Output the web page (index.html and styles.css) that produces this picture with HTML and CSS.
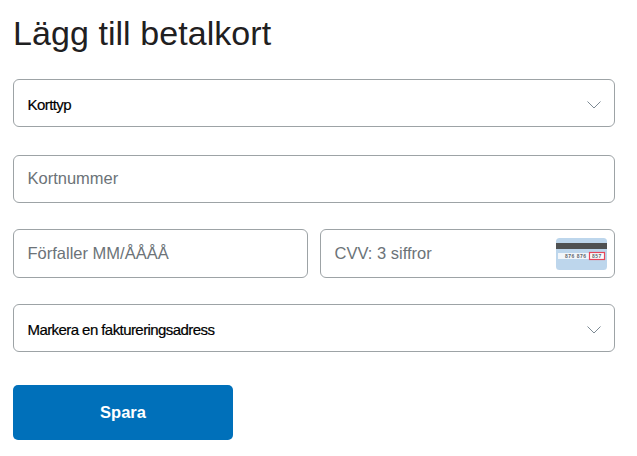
FILE: index.html
```html
<!DOCTYPE html>
<html lang="sv">
<head>
<meta charset="utf-8">
<title>Lägg till betalkort</title>
<link rel="stylesheet" href="styles.css">
</head>
<body>
<form class="form">
  <h1 class="title">Lägg till betalkort</h1>
  <div class="field select first">
    <span class="select-text">Korttyp</span>
    <svg class="chevron" width="14" height="8" viewBox="0 0 14 8"><path d="M.5 .5l6.5 6.5 6.5-6.5" fill="none" stroke="#7d8a94" stroke-width="1"/></svg>
  </div>
  <div class="field input second"><span class="placeholder">Kortnummer</span></div>
  <div class="row">
    <div class="field input half"><span class="placeholder">Förfaller MM/ÅÅÅÅ</span></div>
    <div class="field input half cvv">
      <span class="placeholder">CVV: 3 siffror</span>
      <svg class="card" width="51" height="32" viewBox="0 0 51 32">
        <rect width="51" height="32" rx="3.5" fill="#bdd6ec"/>
        <rect y="5" width="51" height="6" fill="#4f5152"/>
        <rect x="2" y="15" width="31" height="6" fill="#f2f6fa"/>
        <rect x="33.5" y="14.5" width="15" height="7" fill="#fbfcfd" stroke="#e5475c" stroke-width="1.2"/>
        <text class="card-digits" x="9" y="20">876 876</text>
        <text class="card-digits" x="36" y="20">857</text>
      </svg>
    </div>
  </div>
  <div class="field select third">
    <span class="select-text">Markera en faktureringsadress</span>
    <svg class="chevron" width="14" height="8" viewBox="0 0 14 8"><path d="M.5 .5l6.5 6.5 6.5-6.5" fill="none" stroke="#7d8a94" stroke-width="1"/></svg>
  </div>
  <button class="save" type="button">Spara</button>
</form>
</body>
</html>
```
FILE: styles.css
```css
* { box-sizing: border-box; }
html, body { margin: 0; background: #fff; }
body { font-family: "Liberation Sans", Arial, sans-serif; overflow: hidden; }
.form { width: 637px; padding: 0 22px 0 13px; display: flex; flex-direction: column; }
.title { margin: 11px 0 0; font-size: 34px; line-height: 44px; font-weight: 400; color: #1f2021; height: 44px; letter-spacing: 0.06px; }
.field { display: flex; align-items: center; height: 48px; border: 1px solid #9da3a6; border-radius: 6px; background: #fff; padding: 0 14px; position: relative; }
.select { padding-top: 2px; }
.first { margin-top: 24px; }
.second { margin-top: 28px; padding-bottom: 2px; }
.row { display: flex; gap: 12px; margin-top: 26px; }
.half { height: 49px; }
.half:first-child { width: 295px; }
.half.cvv { width: 295px; }
.third { margin-top: 26px; }
.input { padding-left: 13.5px; }
.placeholder { font-size: 16.5px; color: #6c7378; }
.select-text { font-size: 15px; color: #000; -webkit-text-stroke: 0.2px #000; letter-spacing: -0.57px; margin-left: -0.5px; }
.chevron { margin: 1px -1px 0 auto; }
.card { position: absolute; right: 7px; top: 8px; }
.card-digits { font-size: 5px; font-weight: 700; fill: #5e646c; letter-spacing: 0.5px; }
.save { margin-top: 33px; width: 220px; height: 55px; border: 0; border-radius: 5px; background: #0070ba; color: #fff; font: 700 16.5px "Liberation Sans", Arial, sans-serif; }
```
